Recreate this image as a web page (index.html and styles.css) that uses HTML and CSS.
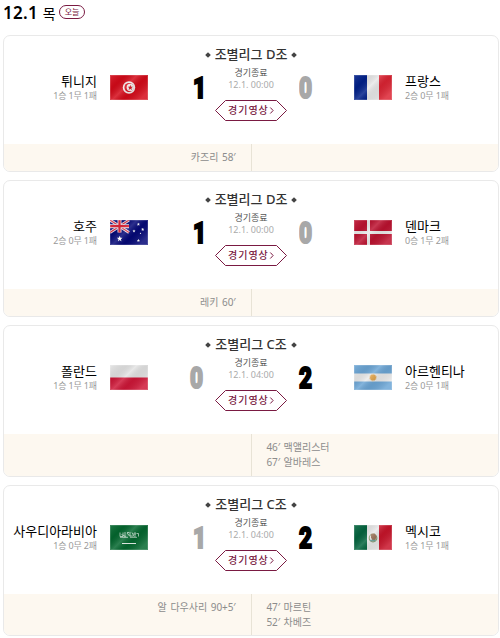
FILE: index.html
```
<!DOCTYPE html>
<html lang="ko">
<head>
    <meta charset="UTF-8" />
    <title>경기 일정</title>
    <link rel="stylesheet" href="styles.css">
</head>
<body>
    <!-- Shared flag gradients and symbols -->
    <svg class="defs" width="0" height="0">
        <defs>
            <linearGradient id="gloss" x1="0" y1="0" x2="1" y2="0.66">
                <stop offset="0" stop-color="#fff" stop-opacity="0.12" />
                <stop offset="0.28" stop-color="#000" stop-opacity="0.07" />
                <stop offset="0.5" stop-color="#fff" stop-opacity="0.16" />
                <stop offset="0.7" stop-color="#000" stop-opacity="0.07" />
                <stop offset="1" stop-color="#fff" stop-opacity="0.15" />
            </linearGradient>
            <symbol id="shine" viewBox="0 0 38 25">
                <rect width="38" height="25" fill="url(#gloss)" />
                <rect x="0.5" y="0.5" width="37" height="24" fill="none" stroke="#fff" stroke-opacity="0.15" />
            </symbol>
            <symbol id="star" viewBox="-5 -5 10 10">
                <path d="M0-5 1.3-1.6 4.8-1.6 2 .8 3 4.5 0 2.3-3 4.5-2 .8-4.8-1.6-1.3-1.6z" />
            </symbol>
        </defs>
    </svg>

    <header class="header">
        <h1>12.1 <span>목</span></h1>
        <em class="today">오늘</em>
    </header>

    <div class="match">
        <div class="board">
            <div class="team home"><strong>튀니지</strong><span>1승 1무 1패</span></div>
            <svg class="flag" viewBox="0 0 38 25">
                <rect width="38" height="25" fill="#d50a19" />
                <circle cx="19" cy="12.5" r="6.2" fill="#f3eded" />
                <circle cx="19" cy="12.5" r="4.6" fill="#d50a19" />
                <circle cx="20.3" cy="12.5" r="3.7" fill="#f3eded" />
                <use href="#star" x="17.6" y="9.8" width="5.4" height="5.4" fill="#d50a19" />
                <use href="#shine" width="38" height="25" />
            </svg>
            <div class="score home one">1</div>
            <div class="info">
                <h2>조별리그 D조</h2>
                <p class="state">경기종료</p>
                <p class="date">12.1. 00:00</p>
                <a class="video" href="#">
                    <svg viewBox="0 0 72 21"><path d="M10.5.5h51L71.5 10.5 61.5 20.5h-51L.5 10.5z" /><path d="M55.3 7.5l2.8 3-2.8 3" /></svg>
                    <span>경기영상</span>
                </a>
            </div>
            <div class="score lose">0</div>
            <svg class="flag" viewBox="0 0 38 25">
                <rect width="38" height="25" fill="#e9e9e9" />
                <rect width="13" height="25" fill="#00208a" />
                <rect x="25" width="13" height="25" fill="#dc2433" />
                <use href="#shine" width="38" height="25" />
            </svg>
            <div class="team"><strong>프랑스</strong><span>2승 0무 1패</span></div>
        </div>
        <div class="goals">
            <ul class="home"><li>카즈리 <b>58′</b></li></ul>
            <ul></ul>
        </div>
    </div>

    <div class="match">
        <div class="board">
            <div class="team home"><strong>호주</strong><span>2승 0무 1패</span></div>
            <svg class="flag" viewBox="0 0 38 25">
                <rect width="38" height="25" fill="#050878" />
                <path d="M0 0l19 12.5M19 0L0 12.5" stroke="#efe8f2" stroke-width="2.8" />
                <path d="M0 0l19 12.5M19 0L0 12.5" stroke="#df3346" stroke-width="1.1" />
                <path d="M9.5 0v12.5M0 6.2h19" stroke="#efe8f2" stroke-width="4" />
                <path d="M9.5 0v12.5M0 6.2h19" stroke="#e02438" stroke-width="2.2" />
                <g fill="#fff">
                    <use href="#star" x="6.7" y="15.7" width="6" height="6" />
                    <use href="#star" x="26.7" y="2.5" width="3.4" height="3.4" />
                    <use href="#star" x="22.3" y="9.3" width="3.4" height="3.4" />
                    <use href="#star" x="31" y="7.7" width="3.4" height="3.4" />
                    <use href="#star" x="26.7" y="18.8" width="3.4" height="3.4" />
                    <use href="#star" x="29.5" y="12.3" width="2" height="2" />
                </g>
                <use href="#shine" width="38" height="25" />
            </svg>
            <div class="score home one">1</div>
            <div class="info">
                <h2>조별리그 D조</h2>
                <p class="state">경기종료</p>
                <p class="date">12.1. 00:00</p>
                <a class="video" href="#">
                    <svg viewBox="0 0 72 21"><path d="M10.5.5h51L71.5 10.5 61.5 20.5h-51L.5 10.5z" /><path d="M55.3 7.5l2.8 3-2.8 3" /></svg>
                    <span>경기영상</span>
                </a>
            </div>
            <div class="score lose">0</div>
            <svg class="flag" viewBox="0 0 38 25">
                <rect width="38" height="25" fill="#bd1230" />
                <path d="M14.5 0v25M0 12.5h38" stroke="#ececec" stroke-width="3" />
                <use href="#shine" width="38" height="25" />
            </svg>
            <div class="team"><strong>덴마크</strong><span>0승 1무 2패</span></div>
        </div>
        <div class="goals">
            <ul class="home"><li>레키 <b>60′</b></li></ul>
            <ul></ul>
        </div>
    </div>

    <div class="match">
        <div class="board">
            <div class="team home"><strong>폴란드</strong><span>1승 1무 1패</span></div>
            <svg class="flag" viewBox="0 0 38 25">
                <rect width="38" height="25" fill="#e4e4e4" />
                <rect y="12.5" width="38" height="12.5" fill="#cf1738" />
                <use href="#shine" width="38" height="25" />
            </svg>
            <div class="score home lose">0</div>
            <div class="info">
                <h2>조별리그 C조</h2>
                <p class="state">경기종료</p>
                <p class="date">12.1. 04:00</p>
                <a class="video" href="#">
                    <svg viewBox="0 0 72 21"><path d="M10.5.5h51L71.5 10.5 61.5 20.5h-51L.5 10.5z" /><path d="M55.3 7.5l2.8 3-2.8 3" /></svg>
                    <span>경기영상</span>
                </a>
            </div>
            <div class="score">2</div>
            <svg class="flag" viewBox="0 0 38 25">
                <rect width="38" height="25" fill="#6ca6d6" />
                <rect y="8.5" width="38" height="8" fill="#ebebeb" />
                <circle cx="19" cy="12.5" r="3" fill="#e0a34a" />
                <circle cx="19" cy="12.5" r="3.3" fill="none" stroke="#e5b877" stroke-dasharray="1 .7" />
                <use href="#shine" width="38" height="25" />
            </svg>
            <div class="team"><strong>아르헨티나</strong><span>2승 0무 1패</span></div>
        </div>
        <div class="goals">
            <ul class="home"></ul>
            <ul>
                <li><b>46′</b> 맥앨리스터</li>
                <li><b>67′</b> 알바레스</li>
            </ul>
        </div>
    </div>

    <div class="match">
        <div class="board">
            <div class="team home"><strong>사우디아라비아</strong><span>1승 0무 2패</span></div>
            <svg class="flag" viewBox="0 0 38 25">
                <rect width="38" height="25" fill="#04682f" />
                <path d="M10 7.500v4h3v-4M11.500 9.500l4 2M15 7v5M17 8l3 3.500M20 7v4h3M22 7.500l2 4M25 7v5M26.500 8.500h2v3M10 12.300h8M20 12.300h7M17 7.500h2M23 9h3" fill="none" stroke="#c9dfd2" stroke-width="0.8" />
                <path d="M12 18.5h14" stroke="#e7f1eb" />
                <use href="#shine" width="38" height="25" />
            </svg>
            <div class="score home one lose">1</div>
            <div class="info">
                <h2>조별리그 C조</h2>
                <p class="state">경기종료</p>
                <p class="date">12.1. 04:00</p>
                <a class="video" href="#">
                    <svg viewBox="0 0 72 21"><path d="M10.5.5h51L71.5 10.5 61.5 20.5h-51L.5 10.5z" /><path d="M55.3 7.5l2.8 3-2.8 3" /></svg>
                    <span>경기영상</span>
                </a>
            </div>
            <div class="score">2</div>
            <svg class="flag" viewBox="0 0 38 25">
                <rect width="38" height="25" fill="#e9e9e9" />
                <rect width="13" height="25" fill="#04653f" />
                <rect x="25" width="13" height="25" fill="#c8142a" />
                <circle cx="19" cy="13" r="3.8" fill="none" stroke="#8d9c72" stroke-width="1.2" />
                <path d="M17 9l3.5-.5 2 2.5-1 4-3 .5-1.5-3z" fill="#997156" />
                <path d="M16 15.5h5.5" stroke="#6ba6a0" stroke-width="1.5" />
                <use href="#shine" width="38" height="25" />
            </svg>
            <div class="team"><strong>멕시코</strong><span>1승 1무 1패</span></div>
        </div>
        <div class="goals last">
            <ul class="home"><li>알 다우사리 <b>90+5′</b></li></ul>
            <ul>
                <li><b>47′</b> 마르틴</li>
                <li><b>52′</b> 차베즈</li>
            </ul>
        </div>
    </div>
</body>
</html>
```
FILE: styles.css
```
* {
    margin: 0;
    padding: 0;
    box-sizing: border-box;
}

body {
    width: 500px;
    padding: 0 1px 0 3px;
    background: #fff;
    color: #000;
    font-family: 'Noto Sans', 'Noto Sans CJK KR', sans-serif;
    overflow: hidden;
}

.defs {
    display: block;
}

/* Date line */
.header {
    display: flex;
    height: 35px;
    padding-top: 5px;
}

h1 {
    width: 56px;
    font-size: 17px;
    font-weight: 600;
    line-height: 15px;
    letter-spacing: 0.3px;
    white-space: nowrap;
}

h1 span {
    font-size: 14px;
    font-weight: 400;
}

.today {
    width: 26px;
    height: 14px;
    border: 1px solid #7a1a42;
    border-radius: 7px;
    color: #7a1a42;
    font-size: 8px;
    font-style: normal;
    line-height: 12px;
    text-align: center;
}

/* Match card */
.match {
    margin-bottom: 8px;
    border: 1px solid #e9e9e9;
    border-radius: 7px;
    overflow: hidden;
}

.board {
    display: grid;
    grid-template-columns: 106px 38px 55px 96px 55px 38px 106px;
    height: 108px;
    padding-top: 10px;
}

.flag {
    width: 38px;
    height: 25px;
    margin-top: 29px;
}

.team {
    margin: 28px 0 0 13px;
    white-space: nowrap;
}

.team.home {
    margin: 28px 13px 0 0;
    text-align: right;
}

.team strong {
    display: block;
    font-size: 13px;
    font-weight: 400;
    line-height: 15px;
}

.team span {
    display: block;
    color: #999;
    font-size: 9px;
    line-height: 13px;
    letter-spacing: -0.15px;
}

/* Scores are narrow and heavy */
.score {
    margin-top: 25px;
    font-family: Roboto, sans-serif;
    font-size: 30px;
    font-weight: 900;
    line-height: 33px;
    transform: scaleX(0.75);
    transform-origin: 0 0;
    -webkit-text-stroke: 2px currentColor;
}

.score.home {
    text-align: right;
    transform-origin: 100% 0;
}

.score.one {
    margin-right: -3px;
    margin-left: 3px;
}

.score.lose {
    color: #a8a8a8;
}

.info {
    display: flex;
    flex-direction: column;
    align-items: center;
    white-space: nowrap;
}

h2 {
    display: flex;
    align-items: center;
    gap: 5px;
    height: 17px;
    color: #333;
    font-size: 13px;
    font-weight: 500;
    line-height: 17px;
}

h2::before,
h2::after {
    content: '';
    width: 4px;
    height: 4px;
    background: #444;
    transform: rotate(45deg);
}

.state {
    margin-top: 4px;
    color: #555;
    font-size: 9px;
    line-height: 12px;
}

.date {
    color: #aaa;
    font-size: 9px;
    line-height: 11px;
}

.video {
    position: relative;
    width: 72px;
    height: 21px;
    margin-top: 10px;
    color: #7a1a42;
    font-size: 10px;
    font-weight: 500;
    line-height: 20px;
    letter-spacing: 1px;
    text-decoration: none;
}

.video svg {
    position: absolute;
    inset: 0;
    width: 72px;
    height: 21px;
    fill: none;
    stroke: #7a1a42;
}

.video span {
    display: block;
    padding-left: 13px;
}

/* Goal scorers */
.goals {
    display: flex;
    background: #fdf8f0;
    color: #8c8c8c;
    font-size: 10px;
    line-height: 15px;
    word-spacing: 1px;
}

.goals ul {
    flex: 1;
    padding: 6px 15px;
    list-style: none;
}

.goals ul.home {
    text-align: right;
}

.goals ul + ul {
    border-left: 1px solid #e8e3d6;
}

.goals b {
    font-weight: 400;
    letter-spacing: -0.1px;
}

.goals.last {
    height: 41px;
}
```
